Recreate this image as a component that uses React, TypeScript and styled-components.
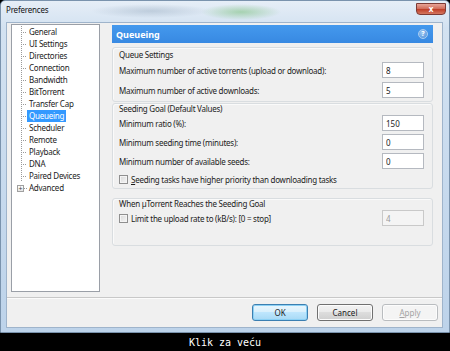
import React from 'react';
import styled, { createGlobalStyle } from 'styled-components';

const GlobalStyle = createGlobalStyle`
  html, body {
    margin: 0;
    padding: 0;
    background: #000;
  }
  body {
    width: 450px;
    height: 351px;
    overflow: hidden;
    font-family: 'Noto Sans', 'DejaVu Sans', sans-serif;
    color: #1c1c1c;
  }
`;

const treeItems = [
    'General',
    'UI Settings',
    'Directories',
    'Connection',
    'Bandwidth',
    'BitTorrent',
    'Transfer Cap',
    'Queueing',
    'Scheduler',
    'Remote',
    'Playback',
    'DNA',
    'Paired Devices',
];

function App() {
    return (
        <>
            <GlobalStyle />
            <Window>
                <TitleBar>
                    <Title>Preferences</Title>
                    <CloseButton>x</CloseButton>
                </TitleBar>
                <Client>
                    <Body>
                        <Tree>
                            <Branch>
                                {treeItems.map((item) => (
                                    <TreeItem key={item}>
                                        <Tick />
                                        <TreeLabel selected={item === 'Queueing'}>{item}</TreeLabel>
                                    </TreeItem>
                                ))}
                                <TreeItem last>
                                    <PlusBox>+</PlusBox>
                                    <Tick short />
                                    <TreeLabel>Advanced</TreeLabel>
                                </TreeItem>
                            </Branch>
                        </Tree>
                        <Content>
                            <Header>
                                <HeaderTitle>Queueing</HeaderTitle>
                                <HelpIcon>?</HelpIcon>
                            </Header>
                            <Group top={4} padTop={2} padBottom={3} gap={4}>
                                <GroupLabel>Queue Settings</GroupLabel>
                                <Row>
                                    <span>Maximum number of active torrents (upload or download):</span>
                                    <Field value="8" />
                                </Row>
                                <Row>
                                    <span>Maximum number of active downloads:</span>
                                    <Field value="5" />
                                </Row>
                            </Group>
                            <Group top={1} padTop={0} padBottom={2} gap={3}>
                                <GroupLabel>Seeding Goal (Default Values)</GroupLabel>
                                <Row>
                                    <span>Minimum ratio (%):</span>
                                    <Field value="150" />
                                </Row>
                                <Row>
                                    <span>Minimum seeding time (minutes):</span>
                                    <Field value="0" />
                                </Row>
                                <Row>
                                    <span>Minimum number of available seeds:</span>
                                    <Field value="0" />
                                </Row>
                                <CheckRow>
                                    <Check />
                                    <span>
                                        <u>S</u>eeding tasks have higher priority than downloading tasks
                                    </span>
                                </CheckRow>
                            </Group>
                            <Group top={9} padTop={0} padBottom={19} gap={3}>
                                <GroupLabel>When µTorrent Reaches the Seeding Goal</GroupLabel>
                                <Row>
                                    <CheckLabel>
                                        <Check />
                                        <span>Limit the upload rate to (kB/s): [0 = stop]</span>
                                    </CheckLabel>
                                    <Field value="4" disabled />
                                </Row>
                            </Group>
                        </Content>
                    </Body>
                    <Footer>
                        <Button primary>OK</Button>
                        <Button>Cancel</Button>
                        <Button disabled>
                            <u>A</u>pply
                        </Button>
                    </Footer>
                </Client>
            </Window>
            <Caption>Klik za veću</Caption>
        </>
    );
}

export default App;

const Window = styled.div`
    width: 450px;
    height: 333px;
    box-sizing: border-box;
    display: flex;
    flex-direction: column;
    padding: 0 6px 4px 5px;
    border-radius: 5px 5px 0 0;
    border: 1px solid #7a93ad;
    background:
        radial-gradient(ellipse 40px 8px at 240px 11px, rgba(120, 190, 120, 0.55), transparent),
        radial-gradient(ellipse 60px 7px at 150px 10px, rgba(150, 170, 190, 0.45), transparent),
        linear-gradient(to bottom, #e6eef7 0%, #d3e2f1 8%, #c6d9ed 60%, #bdd3ea 100%);
`;

const TitleBar = styled.div`
    height: 22px;
    display: flex;
    align-items: flex-start;
    justify-content: space-between;
    padding-top: 2px;
    box-sizing: border-box;
`;

const Title = styled.span`
    font-size: 8px;
    letter-spacing: -0.2px;
    line-height: 14px;
    color: #111;
`;

const CloseButton = styled.span`
    width: 30px;
    height: 12px;
    margin-right: -3px;
    border-radius: 0 0 4px 4px;
    border: 1px solid #7d3a34;
    box-sizing: border-box;
    background: linear-gradient(to bottom, #e8a497 0%, #d2705e 45%, #c0402a 55%, #d5775f 100%);
    color: #fff;
    font-size: 8px;
    font-weight: bold;
    line-height: 9px;
    text-align: center;
`;

const Client = styled.div`
    flex: 1;
    display: flex;
    flex-direction: column;
    background: #f0f0f0;
    border: 1px solid #9fb4cb;
`;

const Body = styled.div`
    flex: 1;
    display: flex;
    gap: 12px;
    padding: 1px 9px 0 4px;
`;

const Tree = styled.div`
    width: 89px;
    height: 268px;
    box-sizing: border-box;
    background: #fff;
    border: 1px solid #9a9fa7;
    padding-top: 1px;
`;

const Branch = styled.ul`
    list-style: none;
    margin: 0 0 0 9px;
    padding: 0;
    height: 162px;
    background: linear-gradient(#9a9a9a 50%, transparent 50%) 0 0 / 1px 2px repeat-y;
`;

const TreeItem = styled.li<{ last?: boolean }>`
    height: 12px;
    display: flex;
    align-items: center;
    font-size: 8px;
    letter-spacing: -0.25px;
    background: ${(p) => (p.last ? '#fff' : 'transparent')};
`;

const Tick = styled.span<{ short?: boolean }>`
    width: ${(p) => (p.short ? 3 : 6)}px;
    height: 1px;
    background: linear-gradient(to right, #9a9a9a 50%, transparent 50%) 0 0 / 2px 1px repeat-x;
`;

const PlusBox = styled.span`
    width: 7px;
    height: 7px;
    margin-left: -4px;
    box-sizing: border-box;
    border: 1px solid #a0a0a0;
    background: linear-gradient(to bottom, #ffffff, #e4e4e4);
    font-size: 7px;
    line-height: 5px;
    text-align: center;
    color: #444;
`;

const TreeLabel = styled.span<{ selected?: boolean }>`
    padding: 0 2px;
    line-height: 12px;
    white-space: nowrap;
    background: ${(p) => (p.selected ? '#3399ff' : 'transparent')};
    color: ${(p) => (p.selected ? '#fff' : '#1c1c1c')};
`;

const Content = styled.div`
    width: 321px;
    display: flex;
    flex-direction: column;
    padding-top: 1px;
`;

const Header = styled.div`
    height: 18px;
    display: flex;
    align-items: center;
    justify-content: space-between;
    padding: 0 5px 0 4px;
    background: linear-gradient(to bottom, #4499ed, #3889e2);
`;

const HeaderTitle = styled.span`
    color: #fff;
    font-weight: bold;
    font-size: 9px;
`;

const HelpIcon = styled.span`
    width: 10px;
    height: 10px;
    border-radius: 50%;
    box-sizing: border-box;
    border: 1px solid #a9cdf2;
    background: radial-gradient(circle at 40% 35%, #9cc7f3, #4d8fd8);
    color: #fff;
    font-size: 7px;
    font-weight: bold;
    line-height: 8px;
    text-align: center;
`;

const Group = styled.div<{ top: number; padTop: number; padBottom: number; gap: number }>`
    margin-top: ${(p) => p.top}px;
    display: flex;
    flex-direction: column;
    gap: ${(p) => p.gap}px;
    padding: ${(p) => `${p.padTop}px 8px ${p.padBottom}px 6px`};
    border: 1px solid #d9dde0;
    border-radius: 3px;
    box-shadow: inset 1px 1px 0 #fafafa;
    font-size: 8px;
    letter-spacing: -0.25px;
`;

const GroupLabel = styled.div`
    line-height: 10px;
    margin-bottom: -2px;
`;

const Row = styled.div`
    height: 16px;
    display: flex;
    align-items: center;
    justify-content: space-between;
`;

const CheckRow = styled.label`
    height: 14px;
    display: flex;
    align-items: center;
    gap: 3px;
`;

const CheckLabel = styled.label`
    display: flex;
    align-items: center;
    gap: 3px;
`;

const Check = styled.span`
    width: 9px;
    height: 9px;
    box-sizing: border-box;
    border: 1px solid #8f8f8f;
    background: linear-gradient(135deg, #d8d8d8, #f6f6f6);
    box-shadow: inset 0 0 0 1px #f4f4f4;
`;

const Field = styled.input.attrs({ readOnly: true })`
    width: 42px;
    height: 16px;
    box-sizing: border-box;
    padding: 0 3px;
    border: 1px solid ${(p) => (p.disabled ? '#c9c9c9' : '#b5b9c0')};
    background: ${(p) => (p.disabled ? '#f4f4f4' : '#fff')};
    color: ${(p) => (p.disabled ? '#9a9a9a' : '#1c1c1c')};
    font-family: 'Noto Sans', sans-serif;
    font-size: 8px;
    outline: none;
`;

const Footer = styled.div`
    height: 30px;
    margin-top: 5px;
    box-sizing: border-box;
    display: flex;
    align-items: center;
    justify-content: flex-end;
    gap: 9px;
    padding: 0 4px 0 0;
    border-top: 1px solid #c8c8c8;
    box-shadow: inset 0 1px 0 #fbfbfb;
`;

const Button = styled.button<{ primary?: boolean }>`
    width: 56px;
    height: 17px;
    padding: 0;
    border-radius: 3px;
    font-family: 'Noto Sans', sans-serif;
    font-size: 8px;
    border: 1px solid ${(p) => (p.primary ? '#3c7fb1' : p.disabled ? '#b9bcbf' : '#707070')};
    color: ${(p) => (p.disabled ? '#a3a3a3' : '#1c1c1c')};
    background: ${(p) =>
        p.primary
            ? 'linear-gradient(to bottom, #eaf6fd 0%, #d9f0fc 45%, #bee6fd 50%, #a7d9f5 100%)'
            : p.disabled
              ? '#f4f4f4'
              : 'linear-gradient(to bottom, #f2f2f2 0%, #ebebeb 45%, #dddddd 50%, #cfcfcf 100%)'};
    box-shadow: ${(p) => (p.primary ? 'inset 0 0 0 1px #8cd1f5' : 'inset 0 0 0 1px #fcfcfc')};
`;

const Caption = styled.div`
    height: 18px;
    display: flex;
    align-items: center;
    justify-content: center;
    color: #fff;
    font-family: 'DejaVu Sans Mono', 'Liberation Mono', monospace;
    font-size: 10px;
`;
